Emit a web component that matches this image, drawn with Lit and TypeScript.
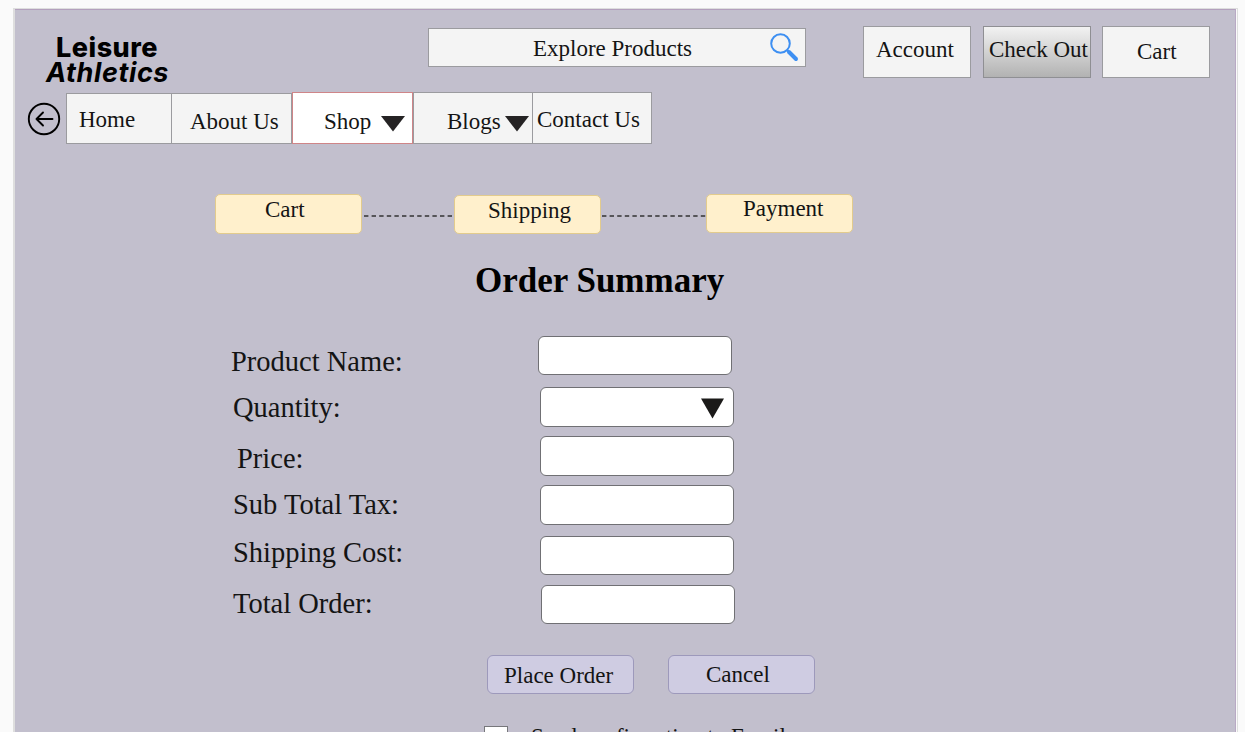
import { LitElement, html, css } from "lit";
import { customElement } from "lit/decorators.js";

@customElement("app-root")
export class AppRoot extends LitElement {
  static styles = css`
    :host {
      display: block;
      height: 732px;
      overflow: hidden;
      background: #fafafa;
      padding: 8px 7px 0 13px;
      box-sizing: border-box;
      font-family: "Liberation Serif", "Times New Roman", serif;
      font-size: 23px;
      line-height: 26px;
      color: #141414;
      white-space: nowrap;
    }
    * { box-sizing: border-box; }
    .frame {
      height: 740px;
      border: 1px solid #dedede;
      border-left-width: 2px;
      padding-right: 1px;
    }
    .page {
      height: 100%;
      background: #c2bfcd;
      border-top: 1px solid #b3a0bd;
      border-right: 1px solid #b9a9c4;
    }
    .header { display: flex; align-items: flex-start; height: 82px; }
    .logo {
      width: 413px;
      padding: 25px 0 0 31px;
      font-family: Inter, "Open Sans", sans-serif;
      font-size: 27px;
      line-height: 25px;
      color: #000;
    }
    .logo-top { padding-left: 10px; font-weight: 800; letter-spacing: 0.5px; }
    .logo-bottom { font-weight: 700; font-style: italic; letter-spacing: 0.6px; }
    .box { border: 1px solid #9b9b9f; background: #f4f4f4; flex: none; }
    .search {
      width: 378px;
      height: 39px;
      margin-top: 18px;
      padding: 7px 6px 0 104px;
      display: flex;
      justify-content: space-between;
    }
    .lens { width: 30px; height: 30px; margin-top: -4px; }
    .action { width: 108px; height: 52px; margin-top: 16px; }
    .account { margin-left: 57px; padding: 10px 0 0 12px; }
    .checkout {
      margin-left: 12px;
      padding: 10px 0 0 5px;
      background: linear-gradient(#f2f2f2, #b2b2b2);
      border-color: #8f8f93;
    }
    .cart { margin-left: 11px; padding: 12px 0 0 34px; }
    .nav { display: flex; align-items: flex-start; height: 53px; padding-left: 12px; }
    .back { width: 34px; height: 34px; margin: 10px 5px 0 0; flex: none; }
    .tab { height: 52px; display: flex; align-items: flex-start; }
    .home { width: 120px; margin-top: 1px; height: 51px; padding: 13px 0 0 12px; }
    .about { width: 121px; margin: 1px 0 0 -15px; height: 51px; padding: 15px 0 0 18px; }
    .shop { width: 121px; padding: 16px 0 0 31px; background: #fff; border-color: #cf8588; }
    .blogs { width: 120px; padding: 16px 0 0 33px; }
    .contact { width: 120px; margin-left: -1px; padding: 14px 0 0 4px; }
    .down { width: 24px; height: 16px; margin: 7px 0 0 10px; flex: none; }
    .blogs .down { margin-left: 4px; }
    .steps { display: flex; align-items: flex-start; height: 75px; padding: 49px 0 0 200px; }
    .step {
      width: 147px;
      height: 40px;
      border: 1px solid #e2cb8d;
      border-radius: 5px;
      background: #fff0cc;
      flex: none;
    }
    .s1 { padding: 2px 0 0 49px; }
    .s2 { height: 39px; margin-top: 1px; padding: 2px 0 0 33px; }
    .s3 { height: 39px; padding: 1px 0 0 36px; }
    .dash { height: 2px; flex: none; }
    .d1 { width: 90px; margin: 21px 0 0 2px; }
    .d2 { width: 104px; margin: 21px 0 0 1px; }
    .title {
      margin: 41px 0 0 460px;
      font-size: 35px;
      line-height: 40px;
      font-weight: 700;
      color: #000;
    }
    .form { display: flex; height: 354px; padding: 35px 0 0 216px; }
    .labels { width: 307px; padding-top: 10px; font-size: 28.5px; line-height: 32px; }
    .label.quantity { margin: 14px 0 0 2px; }
    .label.price { margin: 19px 0 0 6px; }
    .label.tax { margin: 14px 0 0 2px; }
    .label.shipping { margin: 16px 0 0 2px; }
    .label.total { margin: 19px 0 0 2px; }
    .field {
      width: 194px;
      height: 39px;
      border: 1px solid #707074;
      border-radius: 6px;
      background: #fff;
    }
    .field.quantity { height: 40px; margin: 12px 0 0 2px; padding: 10px 9px 0 0; display: flex; justify-content: flex-end; }
    .field.price { margin: 9px 0 0 2px; height: 40px; }
    .field.tax { margin: 9px 0 0 2px; height: 40px; }
    .field.shipping { margin: 11px 0 0 2px; }
    .field.total { margin: 10px 0 0 3px; }
    .select { width: 23px; height: 21px; }
    .buttons { display: flex; gap: 34px; padding-left: 472px; height: 70px; }
    .button {
      width: 147px;
      height: 39px;
      border: 1px solid #9d99bb;
      border-radius: 6px;
      background: #cfcce2;
    }
    .place { padding: 7px 0 0 16px; }
    .cancel { padding: 6px 0 0 37px; }
    .confirm { display: flex; padding-left: 469px; }
    .confirm span { margin-top: -1px; }
    .check { width: 24px; height: 24px; border: 1px solid #77777b; background: #fff; margin: 1px 23px 0 0; }
    svg { display: block; }
  `;

  private down() {
    return html`<svg class="down" viewBox="0 0 24 16"><path d="M0 0H24L12 15.5Z" fill="#252324" /></svg>`;
  }

  render() {
    return html`
      <div class="frame">
        <div class="page">
          <div class="header">
            <div class="logo">
              <div class="logo-top">Leisure</div>
              <div class="logo-bottom">Athletics</div>
            </div>
            <div class="box search">
              <span>Explore Products</span>
              <svg class="lens" viewBox="0 0 30 30" fill="none" stroke="#3d8ff2">
                <circle cx="11.5" cy="11.5" r="9.3" stroke-width="2" />
                <path d="M18 18L20 20" stroke-width="2" />
                <path d="M20 20L27 27" stroke-width="4" stroke-linecap="round" />
              </svg>
            </div>
            <div class="box action account">Account</div>
            <div class="box action checkout">Check Out</div>
            <div class="box action cart">Cart</div>
          </div>
          <div class="nav">
            <svg class="back" viewBox="0 0 34 34" fill="none" stroke="#000" stroke-width="1.9" stroke-linecap="round" stroke-linejoin="round">
              <circle cx="17" cy="17" r="15.2" />
              <path d="M25.5 17H9.5M16 10.5L9.5 17L16 23.5" />
            </svg>
            <div class="box tab home">Home</div>
            <div class="box tab about">About Us</div>
            <div class="box tab shop">Shop ${this.down()}</div>
            <div class="box tab blogs">Blogs ${this.down()}</div>
            <div class="box tab contact">Contact Us</div>
          </div>
          <div class="steps">
            <div class="step s1">Cart</div>
            <svg class="dash d1" viewBox="0 0 90 2"><path d="M0 1H90" stroke="#333" stroke-width="1.4" stroke-dasharray="4.4 3.2" /></svg>
            <div class="step s2">Shipping</div>
            <svg class="dash d2" viewBox="0 0 104 2"><path d="M0 1H104" stroke="#333" stroke-width="1.4" stroke-dasharray="4.4 3.2" /></svg>
            <div class="step s3">Payment</div>
          </div>
          <div class="title">Order Summary</div>
          <div class="form">
            <div class="labels">
              <div class="label">Product Name:</div>
              <div class="label quantity">Quantity:</div>
              <div class="label price">Price:</div>
              <div class="label tax">Sub Total Tax:</div>
              <div class="label shipping">Shipping Cost:</div>
              <div class="label total">Total Order:</div>
            </div>
            <div class="fields">
              <div class="field"></div>
              <div class="field quantity">
                <svg class="select" viewBox="0 0 23 21"><path d="M0 0.5H23L11.5 20.5Z" fill="#1b1a19" /></svg>
              </div>
              <div class="field price"></div>
              <div class="field tax"></div>
              <div class="field shipping"></div>
              <div class="field total"></div>
            </div>
          </div>
          <div class="buttons">
            <div class="button place">Place Order</div>
            <div class="button cancel">Cancel</div>
          </div>
          <div class="confirm">
            <div class="check"></div>
            <span>Send confirmation to Email</span>
          </div>
        </div>
      </div>
    `;
  }
}
